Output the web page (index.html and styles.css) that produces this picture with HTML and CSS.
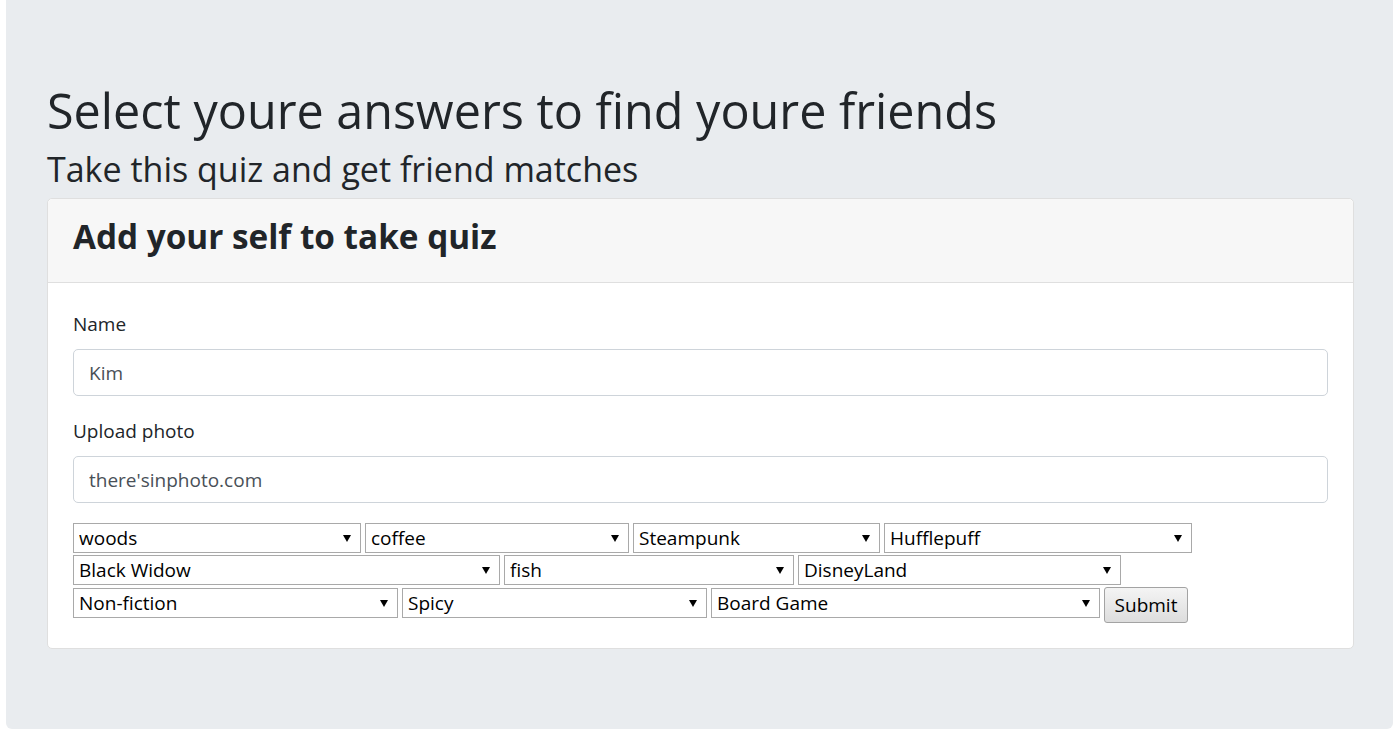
FILE: index.html
```html
<!DOCTYPE html>
<html lang="en">
<head>
<meta charset="utf-8">
<title>Friend Finder</title>
<link rel="stylesheet" href="styles.css">
</head>
<body>
<div class="jumbotron">
  <h1 class="title">Select youre answers to find youre friends</h1>
  <h3 class="subtitle">Take this quiz and get friend matches</h3>
  <div class="card">
    <div class="card-header">
      <h3 class="card-title">Add your self to take quiz</h3>
    </div>
    <form class="card-body">
      <div class="form-group">
        <label class="label" for="name">Name</label>
        <input class="form-control" id="name" type="text" value="Kim">
      </div>
      <div class="form-group">
        <label class="label" for="photo">Upload photo</label>
        <input class="form-control" id="photo" type="text" value="there'sinphoto.com">
      </div>
      <div class="questions">
        <span class="sel w-288"><select><option>woods</option></select></span>
        <span class="sel w-264"><select><option>coffee</option></select></span>
        <span class="sel w-247"><select><option>Steampunk</option></select></span>
        <span class="sel w-308"><select><option>Hufflepuff</option></select></span>
        <span class="sel w-427"><select><option>Black Widow</option></select></span>
        <span class="sel w-290"><select><option>fish</option></select></span>
        <span class="sel w-323"><select><option>DisneyLand</option></select></span>
        <span class="sel sel-last w-325"><select><option>Non-fiction</option></select></span>
        <span class="sel sel-last w-305"><select><option>Spicy</option></select></span>
        <span class="sel sel-last w-389"><select><option>Board Game</option></select></span>
        <button class="submit" type="button">Submit</button>
      </div>
    </form>
  </div>
</div>
</body>
</html>
```
FILE: styles.css
```css
* { box-sizing: border-box; }

html, body {
  margin: 0;
  padding: 0;
  background: #fff;
}

body {
  font-family: "Open Sans", "Noto Sans", sans-serif;
  font-size: 20px;
  line-height: 30px;
  color: #212529;
}

.jumbotron {
  margin: 0 1px 0 6px;
  background: #e9ecef;
  border-radius: 0 0 6px 6px;
  padding: 80px 39px 80px 41px;
}

.title {
  margin: 0 0 8px;
  font-size: 48.5px;
  line-height: 60px;
  font-weight: 500;
}

.subtitle {
  margin: 0 0 8px;
  font-size: 34px;
  line-height: 42px;
  font-weight: 500;
}

.card {
  background: #fff;
  border: 1px solid #dfdfdf;
  border-radius: 5px;
}

.card-header {
  background: #f7f7f7;
  border-bottom: 1px solid #dfdfdf;
  border-radius: 5px 5px 0 0;
  padding: 16px 25px 15px;
}

.card-title {
  margin: 0 0 10px;
  font-size: 33.3px;
  line-height: 42px;
  font-weight: 700;
}

.card-body {
  display: block;
  margin: 0;
  padding: 26px 25px 25px;
}

.form-group {
  margin-bottom: 20px;
}

.label {
  display: block;
  margin-bottom: 10px;
  font-size: 19px;
  line-height: 30px;
}

.form-control {
  display: block;
  width: 100%;
  height: 47px;
  padding: 7px 15px;
  font-family: inherit;
  font-size: 19px;
  line-height: 30px;
  color: #495057;
  background: #fff;
  border: 1px solid #ced4da;
  border-radius: 5px;
  outline: none;
}

.questions {
  display: flex;
  flex-wrap: wrap;
  align-items: flex-start;
  column-gap: 4px;
  row-gap: 2px;
  margin-top: 1px;
}

.sel {
  position: relative;
  display: block;
  height: 30px;
}

.sel-last {
  margin-top: 1px;
}

.sel select {
  appearance: none;
  -webkit-appearance: none;
  display: block;
  width: 100%;
  height: 30px;
  margin: 0;
  padding: 0 24px 0 5px;
  font-family: inherit;
  font-size: 19px;
  line-height: 28px;
  color: #000;
  background: #fff;
  border: 1px solid #a9a9a9;
  border-radius: 0;
  outline: none;
}

.sel::after {
  content: "";
  position: absolute;
  right: 10px;
  top: 12px;
  border-left: 4px solid transparent;
  border-right: 4px solid transparent;
  border-top: 7px solid #000;
  pointer-events: none;
}

.w-288 { width: 288px; }
.w-264 { width: 264px; }
.w-247 { width: 247px; }
.w-308 { width: 308px; }
.w-427 { width: 427px; }
.w-290 { width: 290px; }
.w-323 { width: 323px; }
.w-325 { width: 325px; }
.w-305 { width: 305px; }
.w-389 { width: 389px; }

.submit {
  width: 84px;
  height: 36px;
  margin: 0;
  padding: 0 6px;
  font-family: inherit;
  font-size: 19px;
  line-height: 30px;
  color: #000;
  background: linear-gradient(#f4f4f4, #dddddd);
  border: 1px solid #a3a3a3;
  border-radius: 3px;
}
```
